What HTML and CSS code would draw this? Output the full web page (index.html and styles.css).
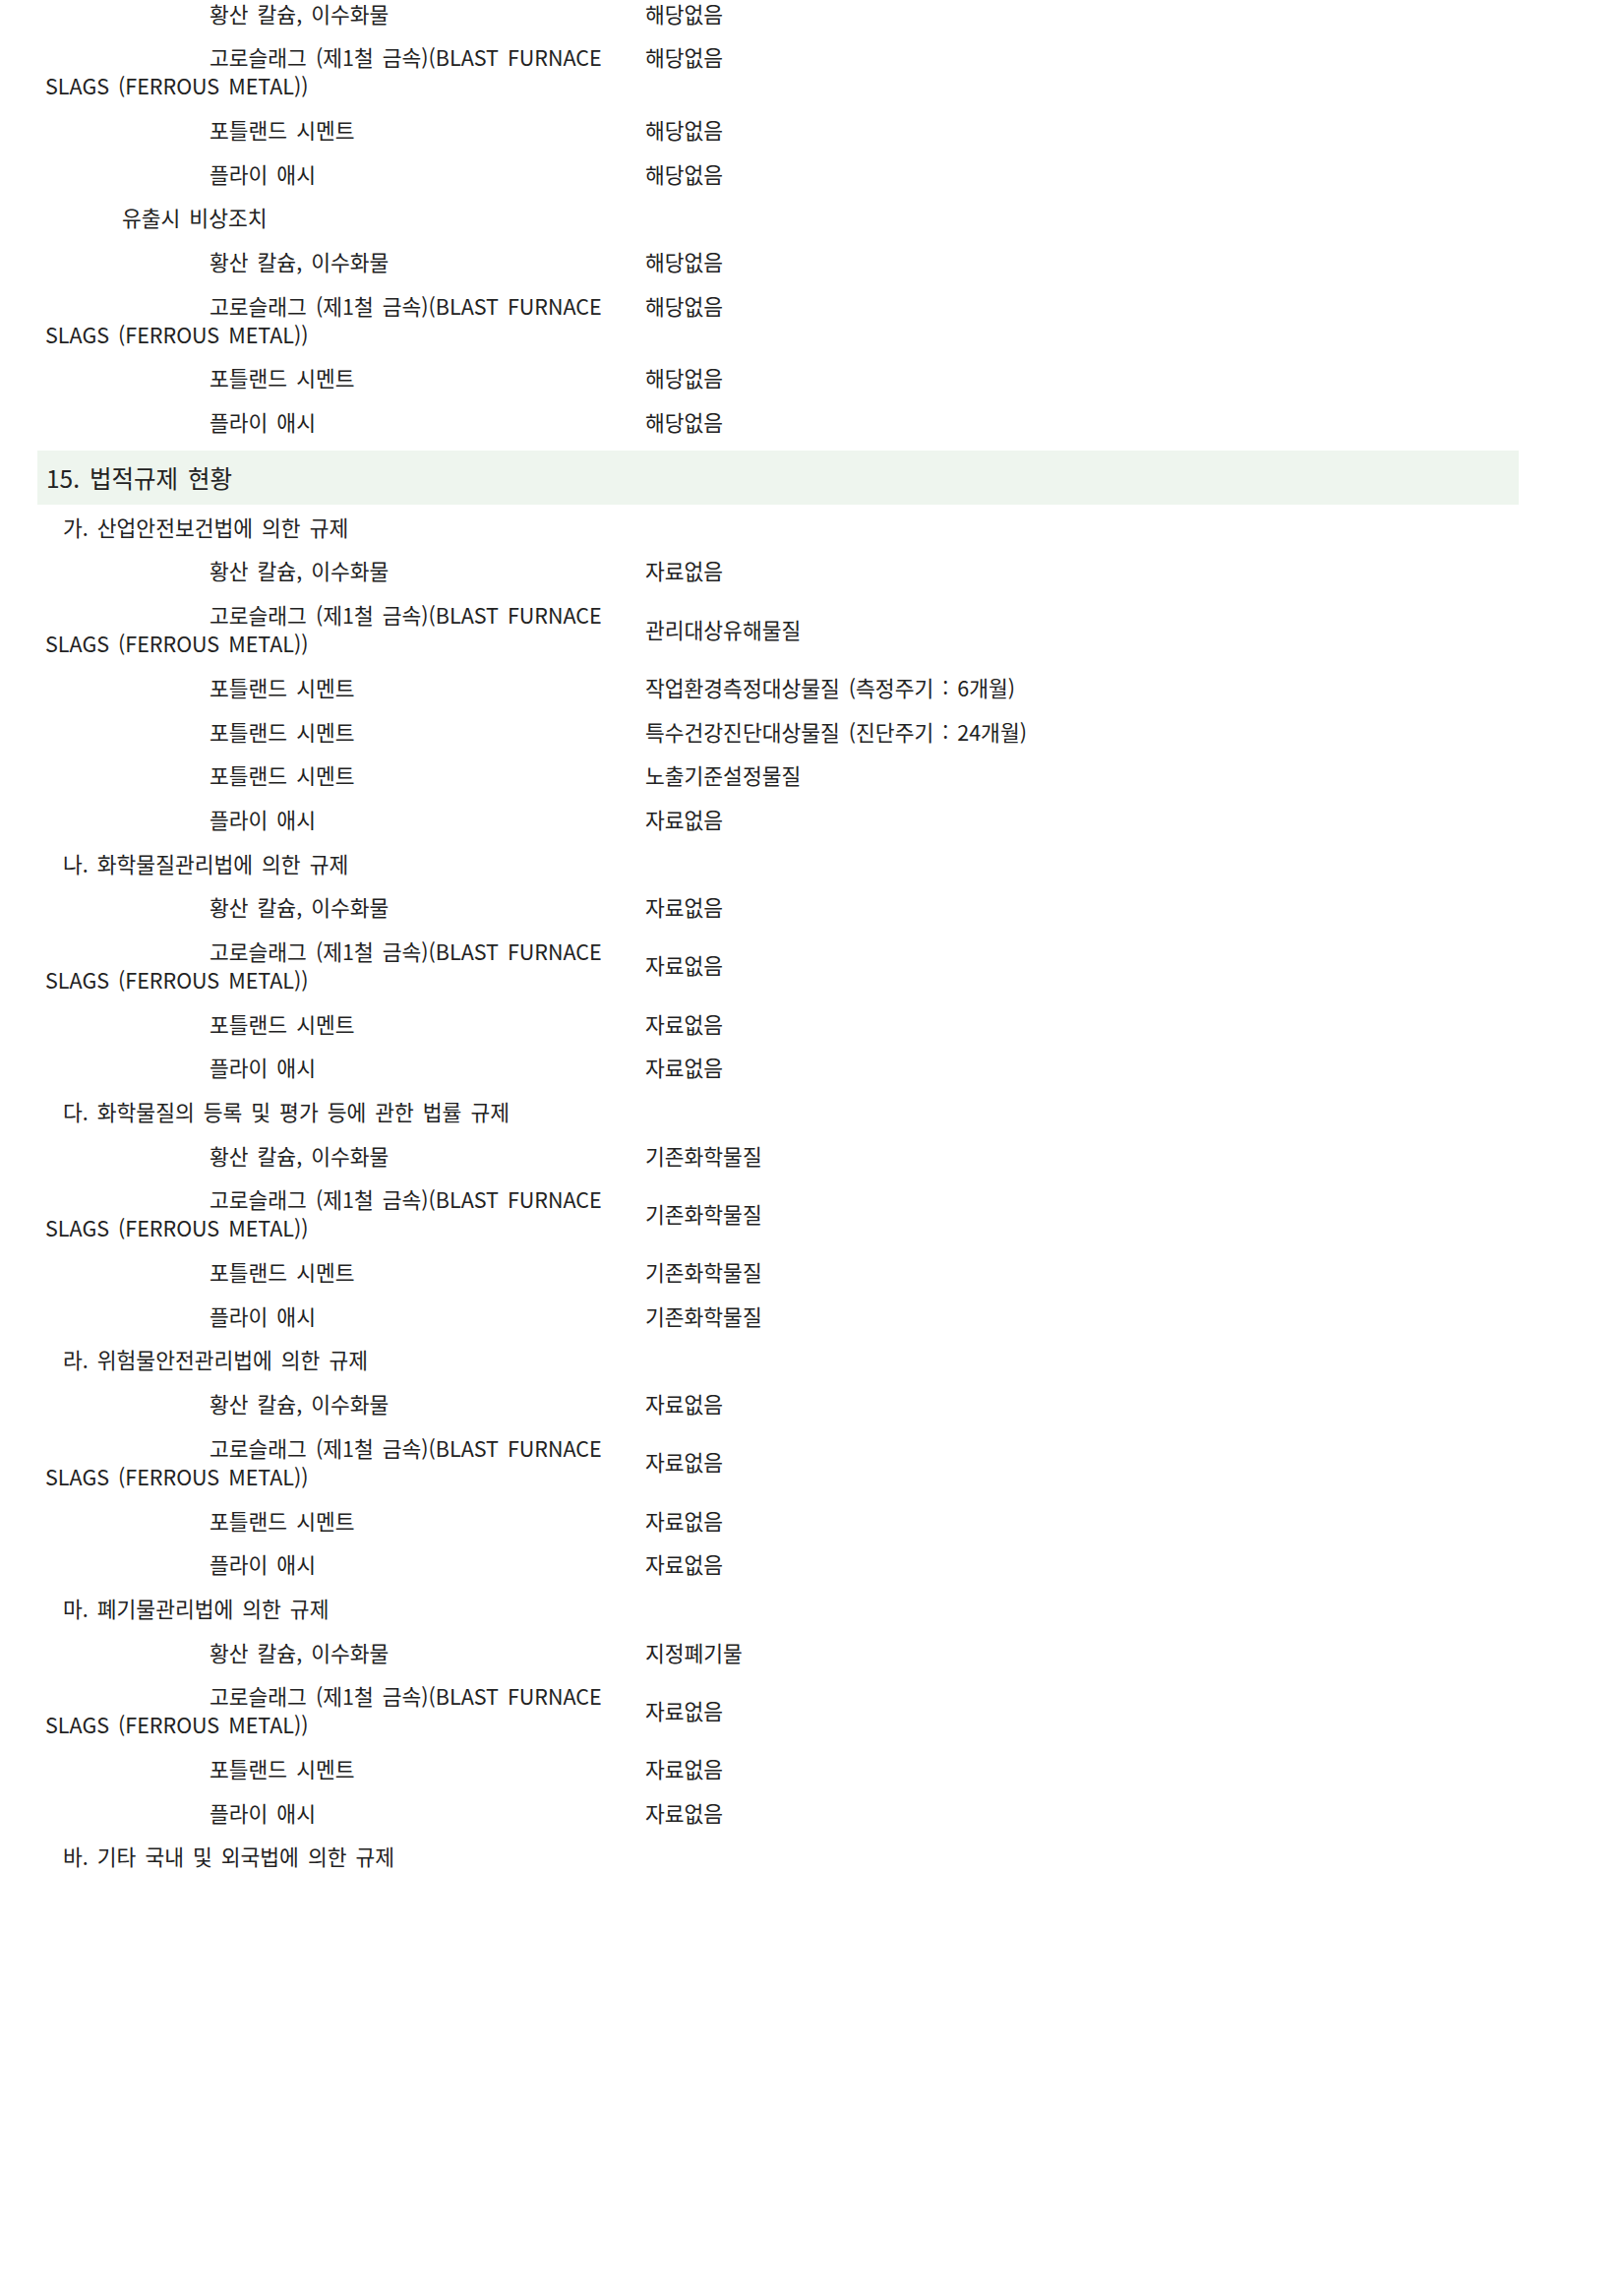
FILE: index.html
```html
<!DOCTYPE html>
<html lang="ko">
<head>
<meta charset="utf-8">
<title>물질안전보건자료</title>
<link rel="stylesheet" href="styles.css">
</head>
<body>
<div class="page">
  <div class="section top-align">
    <div class="row"><div class="name">황산 칼슘, 이수화물</div><div class="val">해당없음</div></div>
    <div class="row"><div class="name">고로슬래그 (제1철 금속)(BLAST FURNACE SLAGS (FERROUS METAL))</div><div class="val">해당없음</div></div>
    <div class="row"><div class="name">포틀랜드 시멘트</div><div class="val">해당없음</div></div>
    <div class="row"><div class="name">플라이 애시</div><div class="val">해당없음</div></div>
    <div class="sub">유출시 비상조치</div>
    <div class="row"><div class="name">황산 칼슘, 이수화물</div><div class="val">해당없음</div></div>
    <div class="row"><div class="name">고로슬래그 (제1철 금속)(BLAST FURNACE SLAGS (FERROUS METAL))</div><div class="val">해당없음</div></div>
    <div class="row"><div class="name">포틀랜드 시멘트</div><div class="val">해당없음</div></div>
    <div class="row"><div class="name">플라이 애시</div><div class="val">해당없음</div></div>
  </div>

  <h2 class="band">15. 법적규제 현황</h2>

  <div class="section mid-align">
    <div class="group">가. 산업안전보건법에 의한 규제</div>
    <div class="row"><div class="name">황산 칼슘, 이수화물</div><div class="val">자료없음</div></div>
    <div class="row"><div class="name">고로슬래그 (제1철 금속)(BLAST FURNACE SLAGS (FERROUS METAL))</div><div class="val">관리대상유해물질</div></div>
    <div class="row"><div class="name">포틀랜드 시멘트</div><div class="val">작업환경측정대상물질 (측정주기 : 6개월)</div></div>
    <div class="row"><div class="name">포틀랜드 시멘트</div><div class="val">특수건강진단대상물질 (진단주기 : 24개월)</div></div>
    <div class="row"><div class="name">포틀랜드 시멘트</div><div class="val">노출기준설정물질</div></div>
    <div class="row"><div class="name">플라이 애시</div><div class="val">자료없음</div></div>

    <div class="group">나. 화학물질관리법에 의한 규제</div>
    <div class="row"><div class="name">황산 칼슘, 이수화물</div><div class="val">자료없음</div></div>
    <div class="row"><div class="name">고로슬래그 (제1철 금속)(BLAST FURNACE SLAGS (FERROUS METAL))</div><div class="val">자료없음</div></div>
    <div class="row"><div class="name">포틀랜드 시멘트</div><div class="val">자료없음</div></div>
    <div class="row"><div class="name">플라이 애시</div><div class="val">자료없음</div></div>

    <div class="group">다. 화학물질의 등록 및 평가 등에 관한 법률 규제</div>
    <div class="row"><div class="name">황산 칼슘, 이수화물</div><div class="val">기존화학물질</div></div>
    <div class="row"><div class="name">고로슬래그 (제1철 금속)(BLAST FURNACE SLAGS (FERROUS METAL))</div><div class="val">기존화학물질</div></div>
    <div class="row"><div class="name">포틀랜드 시멘트</div><div class="val">기존화학물질</div></div>
    <div class="row"><div class="name">플라이 애시</div><div class="val">기존화학물질</div></div>

    <div class="group">라. 위험물안전관리법에 의한 규제</div>
    <div class="row"><div class="name">황산 칼슘, 이수화물</div><div class="val">자료없음</div></div>
    <div class="row"><div class="name">고로슬래그 (제1철 금속)(BLAST FURNACE SLAGS (FERROUS METAL))</div><div class="val">자료없음</div></div>
    <div class="row"><div class="name">포틀랜드 시멘트</div><div class="val">자료없음</div></div>
    <div class="row"><div class="name">플라이 애시</div><div class="val">자료없음</div></div>

    <div class="group">마. 폐기물관리법에 의한 규제</div>
    <div class="row"><div class="name">황산 칼슘, 이수화물</div><div class="val">지정폐기물</div></div>
    <div class="row"><div class="name">고로슬래그 (제1철 금속)(BLAST FURNACE SLAGS (FERROUS METAL))</div><div class="val">자료없음</div></div>
    <div class="row"><div class="name">포틀랜드 시멘트</div><div class="val">자료없음</div></div>
    <div class="row"><div class="name">플라이 애시</div><div class="val">자료없음</div></div>

    <div class="group">바. 기타 국내 및 외국법에 의한 규제</div>
  </div>
</div>
</body>
</html>
```

FILE: styles.css
```css
html, body {
  margin: 0;
  padding: 0;
  background: #ffffff;
}

body {
  font-family: "Noto Sans CJK KR", "Noto Sans", sans-serif;
  font-size: 21.5px;
  word-spacing: 3px;
  color: #222222;
}

.page {
  width: 1506px;
  margin-top: -9.4px;
  padding-left: 38px;
}

.section {
  display: flex;
  flex-direction: column;
}

.row {
  display: grid;
  grid-template-columns: 610px 1fr;
  padding: 8px 0 7.7px 8px;
  line-height: 29px;
}

.top-align .row {
  align-items: start;
}

.mid-align .row {
  align-items: center;
}

.name {
  text-indent: 167px;
  padding-right: 20px;
}

.sub {
  padding: 8px 0 7.7px 86px;
  line-height: 29px;
}

.group {
  padding: 8px 0 7.7px 26px;
  line-height: 29px;
}

.band {
  margin: 7px 0 0 0;
  height: 55px;
  display: flex;
  align-items: center;
  padding-left: 9px;
  background: #eef5ee;
  font-size: 24.5px;
  font-weight: normal;
  color: #222222;
}
```
